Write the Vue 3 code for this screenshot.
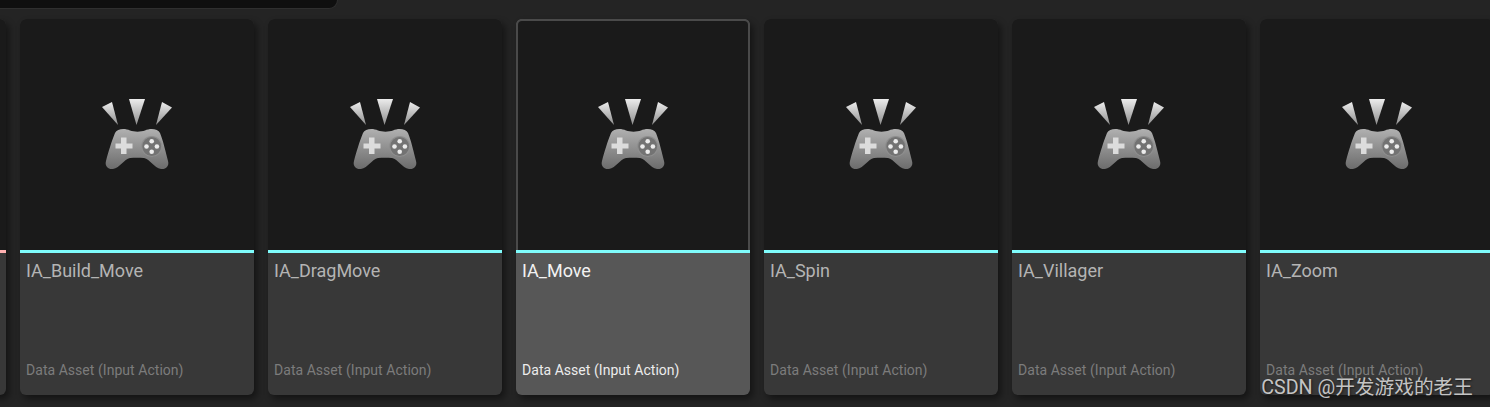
<template>
  <div class="browser">
    <div class="search-bar"></div>
    <div class="tiles">
      <div
        v-for="asset in assets"
        :key="asset.id"
        class="tile"
        :class="{ selected: asset.selected }"
      >
        <div class="thumb">
          <svg class="icon" viewBox="0 0 72 72" width="72" height="72">
            <defs>
              <linearGradient id="spark" x1="0" y1="0" x2="0" y2="1">
                <stop offset="0" stop-color="#ececec" />
                <stop offset="1" stop-color="#8e8e8e" />
              </linearGradient>
              <linearGradient id="pad" x1="0" y1="0" x2="0" y2="1">
                <stop offset="0" stop-color="#b0b0b0" />
                <stop offset="1" stop-color="#6c6c6c" />
              </linearGradient>
            </defs>
            <path d="M1 9 L11 4 L17 27 Z" fill="url(#spark)" />
            <path d="M28 1 L44 1 L35.500 27 Z" fill="url(#spark)" />
            <path d="M61 4 L71 9.500 L55 27 Z" fill="url(#spark)" />
            <path
              d="M14 35 C16 30.500 24 30 29 32.500 C33 34 40 34 44 32.500 C49 30 57 30.500 59 35 C62 42 65 55 67 63 C68.500 68 65 71.500 60 71 C53 70 49 61 43 60 C38 59.500 34 59.500 29 60 C23 61 19 70 12 71 C7 71.500 3.500 68 5 63 C7 55 11 42 14 35 Z"
              fill="url(#pad)"
            />
            <path d="M20 39.500 H25.500 V45.500 H31.500 V50.500 H25.500 V56 H20 V50.500 H14.500 V45.500 H20 Z" fill="#dcdcdc" />
            <circle cx="50.700" cy="48.500" r="10" fill="#737373" stroke="#8e8e8e" stroke-width="1.200" />
            <circle cx="50.700" cy="43.300" r="2.300" fill="#ececec" />
            <circle cx="50.700" cy="53.700" r="2.300" fill="#ececec" />
            <circle cx="45.500" cy="48.500" r="2.300" fill="#ececec" />
            <circle cx="55.900" cy="48.500" r="2.300" fill="#ececec" />
          </svg>
        </div>
        <div class="type-bar" :class="{ pink: asset.pink }"></div>
        <div class="info">
          <div class="name">{{ asset.name }}</div>
          <div class="kind">{{ asset.kind }}</div>
        </div>
      </div>
    </div>
    <div class="watermark">CSDN @开发游戏的老王</div>
  </div>
</template>

<script setup>
const kind = 'Data Asset (Input Action)'

const assets = [
  { id: 0, name: '', kind: '', pink: true },
  { id: 1, name: 'IA_Build_Move', kind },
  { id: 2, name: 'IA_DragMove', kind },
  { id: 3, name: 'IA_Move', kind, selected: true },
  { id: 4, name: 'IA_Spin', kind },
  { id: 5, name: 'IA_Villager', kind },
  { id: 6, name: 'IA_Zoom', kind }
]
</script>

<style>
html,
body {
  margin: 0;
  background: #242424;
}
</style>

<style scoped>
.browser {
  position: relative;
  width: 1490px;
  height: 407px;
  overflow: hidden;
  background: #242424;
  font-family: Roboto, "Liberation Sans", sans-serif;
}

.search-bar {
  width: 338px;
  height: 9px;
  background: #0f0f0f;
  border-bottom: 1px solid #2f2f2f;
  border-right: 1px solid #2f2f2f;
  border-bottom-right-radius: 9px;
  box-sizing: border-box;
}

.tiles {
  display: flex;
  gap: 14px;
  margin-top: 10px;
  margin-left: -228px;
}

.tile {
  flex: none;
  display: flex;
  flex-direction: column;
  box-sizing: border-box;
  width: 234px;
  height: 376px;
  border-radius: 6px;
  overflow: hidden;
  background: #383838;
  box-shadow: 3px 4px 7px rgba(0, 0, 0, 0.45);
}

.thumb {
  flex: none;
  box-sizing: border-box;
  height: 231px;
  display: flex;
  justify-content: center;
  background: #1a1a1a;
}

.icon {
  margin-top: 79px;
}

.type-bar {
  flex: none;
  height: 3px;
  background: #7ffcfc;
}

.type-bar.pink {
  background: #ffb0b0;
}

.info {
  flex: 1;
  display: flex;
  flex-direction: column;
  justify-content: space-between;
  padding: 7px 6px 16px;
}

.name {
  font-size: 18px;
  line-height: 22px;
  color: #b4b4b4;
}

.kind {
  font-size: 14px;
  line-height: 18px;
  letter-spacing: 0.04px;
  color: #7c7c7c;
}

.tile.selected {
  background: #575757;
}

.tile.selected .thumb {
  border: 2px solid #4a4a4a;
  border-bottom: 0;
  border-radius: 6px 6px 0 0;
}

.tile.selected .icon {
  margin-top: 77px;
}

.tile.selected .name {
  color: #f2f2f2;
}

.tile.selected .kind {
  color: #ececec;
}

.watermark {
  position: absolute;
  right: 17px;
  bottom: 8px;
  font-size: 19.7px;
  line-height: 22px;
  color: #c4c4c4;
  text-shadow: 1px 1px 2px #1a1a1a;
  font-family: Roboto, "Noto Sans CJK SC", sans-serif;
}
</style>
